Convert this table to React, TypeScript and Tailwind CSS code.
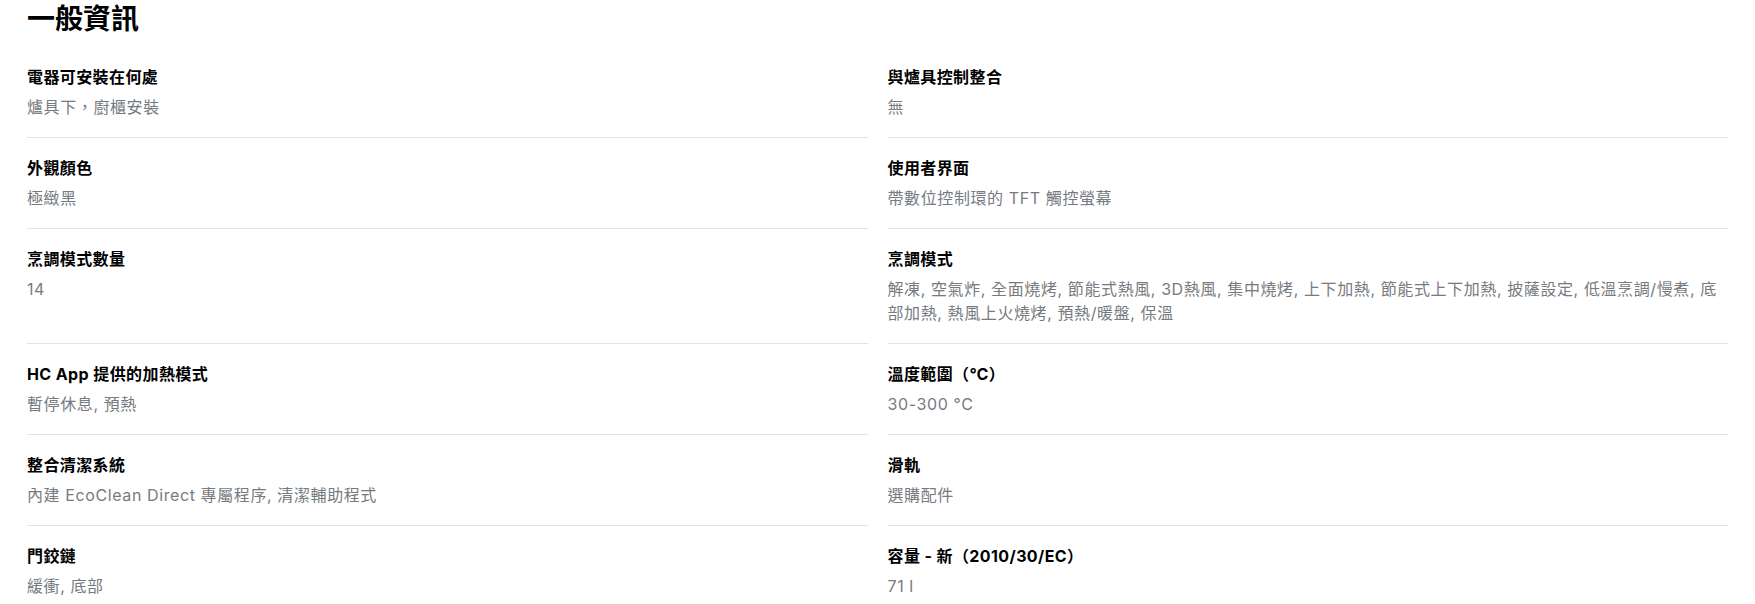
const specs: { label: string; value: string }[] = [
  { label: '電器可安裝在何處', value: '爐具下，廚櫃安裝' },
  { label: '與爐具控制整合', value: '無' },
  { label: '外觀顏色', value: '極緻黑' },
  { label: '使用者界面', value: '帶數位控制環的 TFT 觸控螢幕' },
  { label: '烹調模式數量', value: '14' },
  {
    label: '烹調模式',
    value:
      '解凍, 空氣炸, 全面燒烤, 節能式熱風, 3D熱風, 集中燒烤, 上下加熱, 節能式上下加熱, 披薩設定, 低溫烹調/慢煮, 底部加熱, 熱風上火燒烤, 預熱/暖盤, 保溫',
  },
  { label: 'HC App 提供的加熱模式', value: '暫停休息, 預熱' },
  { label: '溫度範圍（℃）', value: '30-300 °C' },
  { label: '整合清潔系統', value: '內建 EcoClean Direct 專屬程序, 清潔輔助程式' },
  { label: '滑軌', value: '選購配件' },
  { label: '門鉸鏈', value: '緩衝, 底部' },
  { label: '容量 - 新（2010/30/EC）', value: '71 l' },
];

export default function App() {
  return (
    <div className="min-h-screen bg-white px-[27px] font-['Inter','Noto_Sans_CJK_TC',sans-serif]">
      <h2 className="pt-px mb-[10px] text-[28px] leading-9 font-bold text-black">一般資訊</h2>
      <div className="grid grid-cols-2 gap-x-5">
        {specs.map((s) => (
          <div key={s.label} className="border-b border-[#e0e2e5] pt-[18px] pb-[18px]">
            <div className="text-base leading-6 font-bold tracking-[0.4px] text-black">{s.label}</div>
            <div className="mt-[6px] text-base leading-6 tracking-[0.6px] text-[#767b81]">{s.value}</div>
          </div>
        ))}
      </div>
    </div>
  );
}
